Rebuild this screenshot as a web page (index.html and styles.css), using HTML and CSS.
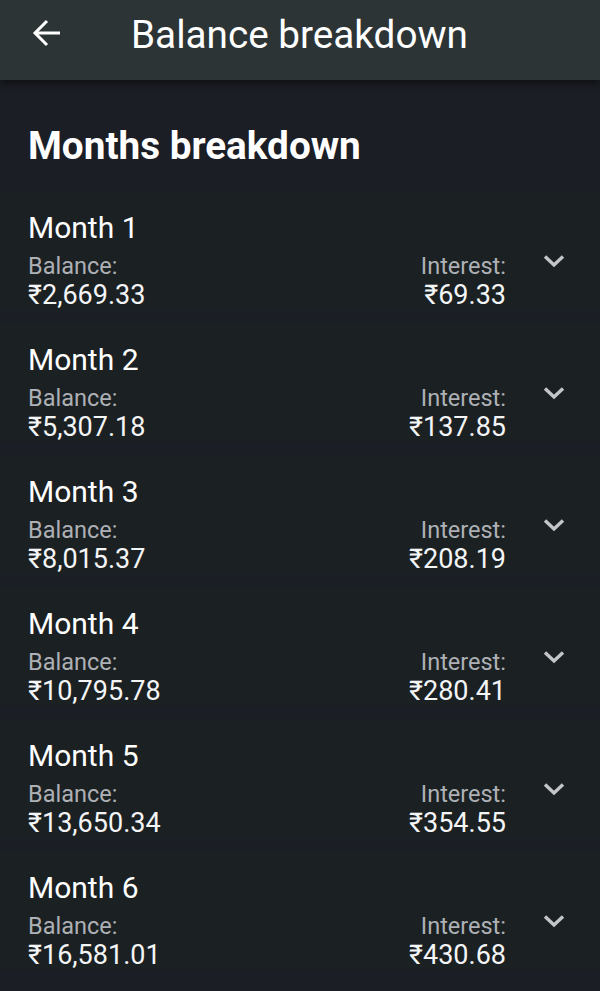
FILE: index.html
```html
<!DOCTYPE html>
<html>
<head>
<meta charset="utf-8">
<link rel="stylesheet" href="styles.css">
</head>
<body>
<header class="appbar">
  <svg class="back" width="32" height="32" viewBox="0 0 32 32"><path d="M29 16H5M16 4L4 16l12 12" fill="none" stroke="#fff" stroke-width="3"/></svg>
  <h1 class="title">Balance breakdown</h1>
</header>
<main class="content">
  <h2 class="section">Months breakdown</h2>
  <div class="list">
    <div class="row">
      <div class="info">
        <div class="month">Month 1</div>
        <div class="cols">
          <div class="col"><div class="label">Balance:</div><div class="value">₹2,669.33</div></div>
          <div class="col right"><div class="label">Interest:</div><div class="value">₹69.33</div></div>
        </div>
      </div>
      <svg class="chev" width="22" height="14" viewBox="0 0 22 14"><path d="M2 2.5L11 11l9-8.5" fill="none" stroke="#c3c5c8" stroke-width="3.4"/></svg>
    </div>
    <div class="row">
      <div class="info">
        <div class="month">Month 2</div>
        <div class="cols">
          <div class="col"><div class="label">Balance:</div><div class="value">₹5,307.18</div></div>
          <div class="col right"><div class="label">Interest:</div><div class="value">₹137.85</div></div>
        </div>
      </div>
      <svg class="chev" width="22" height="14" viewBox="0 0 22 14"><path d="M2 2.5L11 11l9-8.5" fill="none" stroke="#c3c5c8" stroke-width="3.4"/></svg>
    </div>
    <div class="row">
      <div class="info">
        <div class="month">Month 3</div>
        <div class="cols">
          <div class="col"><div class="label">Balance:</div><div class="value">₹8,015.37</div></div>
          <div class="col right"><div class="label">Interest:</div><div class="value">₹208.19</div></div>
        </div>
      </div>
      <svg class="chev" width="22" height="14" viewBox="0 0 22 14"><path d="M2 2.5L11 11l9-8.5" fill="none" stroke="#c3c5c8" stroke-width="3.4"/></svg>
    </div>
    <div class="row">
      <div class="info">
        <div class="month">Month 4</div>
        <div class="cols">
          <div class="col"><div class="label">Balance:</div><div class="value">₹10,795.78</div></div>
          <div class="col right"><div class="label">Interest:</div><div class="value">₹280.41</div></div>
        </div>
      </div>
      <svg class="chev" width="22" height="14" viewBox="0 0 22 14"><path d="M2 2.5L11 11l9-8.5" fill="none" stroke="#c3c5c8" stroke-width="3.4"/></svg>
    </div>
    <div class="row">
      <div class="info">
        <div class="month">Month 5</div>
        <div class="cols">
          <div class="col"><div class="label">Balance:</div><div class="value">₹13,650.34</div></div>
          <div class="col right"><div class="label">Interest:</div><div class="value">₹354.55</div></div>
        </div>
      </div>
      <svg class="chev" width="22" height="14" viewBox="0 0 22 14"><path d="M2 2.5L11 11l9-8.5" fill="none" stroke="#c3c5c8" stroke-width="3.4"/></svg>
    </div>
    <div class="row">
      <div class="info">
        <div class="month">Month 6</div>
        <div class="cols">
          <div class="col"><div class="label">Balance:</div><div class="value">₹16,581.01</div></div>
          <div class="col right"><div class="label">Interest:</div><div class="value">₹430.68</div></div>
        </div>
      </div>
      <svg class="chev" width="22" height="14" viewBox="0 0 22 14"><path d="M2 2.5L11 11l9-8.5" fill="none" stroke="#c3c5c8" stroke-width="3.4"/></svg>
    </div>
  </div>
</main>
</body>
</html>
```
FILE: styles.css
```css
html, body {
  margin: 0;
  padding: 0;
  background: #1b1e25;
  font-family: Roboto, "Noto Sans", sans-serif;
  color: #ffffff;
}
body {
  width: 600px;
  height: 991px;
  overflow: hidden;
}
.appbar {
  height: 80px;
  background: #2c3436;
  display: flex;
  align-items: center;
  padding-left: 31px;
  box-shadow: 0 4px 8px rgba(0,0,0,0.45);
  position: relative;
  z-index: 1;
}
.back {
  display: block;
  margin-top: -14px;
}
.title {
  margin: -12px 0 0 68px;
  font-size: 38.7px;
  font-weight: 400;
  line-height: normal;
}
.section {
  margin: 0;
  box-sizing: border-box;
  padding: 44px 28px 0;
  font-size: 38.7px;
  font-weight: 700;
  line-height: 44px;
  height: 112px;
}
.list {
  display: flex;
  flex-direction: column;
  gap: 14px;
}
.row {
  height: 118px;
  box-sizing: border-box;
  display: flex;
  padding: 18px 35px 0 28px;
  background: #1b2023;
}
.info {
  flex: 1;
  display: flex;
  flex-direction: column;
}
.month {
  font-size: 30px;
  line-height: 36px;
  margin-bottom: 6px;
}
.cols {
  display: flex;
  justify-content: space-between;
}
.col.right {
  text-align: right;
}
.label {
  font-size: 23.5px;
  line-height: 28px;
  color: #adb0b5;
}
.value {
  font-size: 27px;
  line-height: 31px;
  color: #f4f5f6;
}
.chev {
  display: block;
  margin-left: 37px;
  margin-top: 44px;
}
```
